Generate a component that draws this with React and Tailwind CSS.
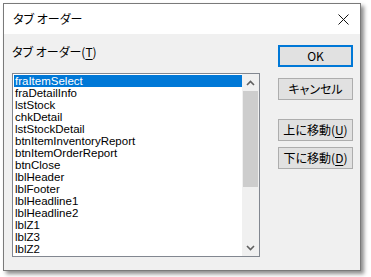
import React from 'react';

const items = [
  'fraItemSelect',
  'fraDetailInfo',
  'lstStock',
  'chkDetail',
  'lstStockDetail',
  'btnItemInventoryReport',
  'btnItemOrderReport',
  'btnClose',
  'lblHeader',
  'lblFooter',
  'lblHeadline1',
  'lblHeadline2',
  'lblZ1',
  'lblZ3',
  'lblZ2',
];

const jp = "font-['Segoe_UI','Noto_Sans_CJK_JP',sans-serif] [font-feature-settings:'palt']";

function Btn({ children, primary }) {
  return (
    <div
      className={`w-[75px] h-[22px] flex items-center justify-center bg-[#e1e1e1] text-[12px] text-black ${jp} ${
        primary ? 'border-2 border-[#0078d7]' : 'border border-[#adadad]'
      }`}
    >
      {children}
    </div>
  );
}

export default function App() {
  return (
    <div className="w-[371px] h-[277px] bg-white pt-[3px] pl-[3px] overflow-hidden">
      <div className="w-[358px] h-[268px] border border-[#7a7a7a] bg-[#f0f0f0] flex flex-col shadow-[3px_3px_4px_rgba(0,0,0,0.45)]">
        {/* Title bar */}
        <div className="h-[30px] bg-white flex items-center justify-between pl-[9px] pr-[10px]">
          <span className={`text-[12px] text-black ${jp}`}>タブ オーダー</span>
          <svg width="11" height="11" viewBox="0 0 11 11" className="mr-[1px]">
            <path d="M0.5 0.5 L10.5 10.5 M10.5 0.5 L0.5 10.5" stroke="#111" strokeWidth="1" />
          </svg>
        </div>

        {/* Body */}
        <div className="flex flex-1 pl-[8px]">
          <div className="flex flex-col w-[248px]">
            <div className={`h-[39px] pt-[9px] leading-[18px] text-[12px] text-black ${jp}`}>
              タブ オーダー(<span className="underline underline-offset-2">T</span>)
            </div>
            <div className="h-[184px] border border-[#828790] bg-white flex">
              <div className="flex-1 pt-[1px] pl-[1px] font-['Liberation_Sans',Arial,sans-serif] text-[11.5px] text-black">
                {items.map((name, i) => (
                  <div
                    key={name}
                    className={`h-[12px] leading-[12px] pl-[1px] whitespace-nowrap ${
                      i === 0 ? 'bg-[#0078d7] text-white' : ''
                    }`}
                  >
                    {name}
                  </div>
                ))}
              </div>
              <div className="w-[17px] bg-[#f0f0f0] flex flex-col">
                <div className="h-[17px] flex items-center justify-center">
                  <svg width="9" height="6" viewBox="0 0 9 6">
                    <path d="M1 5 L4.5 1.5 L8 5" stroke="#606060" strokeWidth="1.6" fill="none" />
                  </svg>
                </div>
                <div className="h-[96px] mx-[1px] bg-[#cdcdcd]" />
                <div className="flex-1" />
                <div className="h-[17px] flex items-center justify-center">
                  <svg width="9" height="6" viewBox="0 0 9 6">
                    <path d="M1 1 L4.5 4.5 L8 1" stroke="#606060" strokeWidth="1.6" fill="none" />
                  </svg>
                </div>
              </div>
            </div>
          </div>

          <div className="flex flex-col ml-[18px] pt-[11px]">
            <Btn primary>OK</Btn>
            <div className="mt-[11px]">
              <Btn>キャンセル</Btn>
            </div>
            <div className="mt-[19px]">
              <Btn>
                上に移動(<span className="underline underline-offset-2">U</span>)
              </Btn>
            </div>
            <div className="mt-[6px]">
              <Btn>
                下に移動(<span className="underline underline-offset-2">D</span>)
              </Btn>
            </div>
          </div>
        </div>
      </div>
    </div>
  );
}
